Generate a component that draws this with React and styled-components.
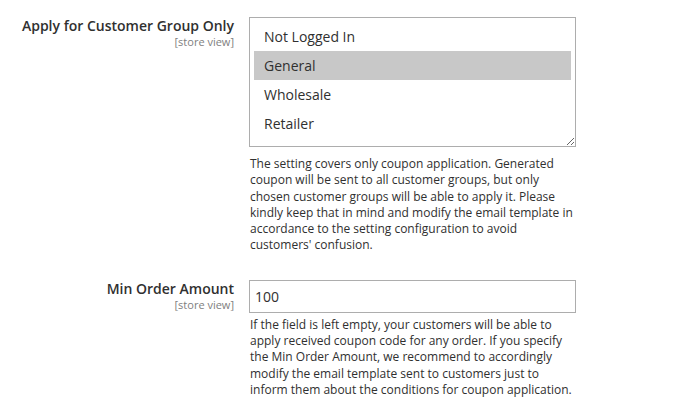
import styled, { createGlobalStyle } from 'styled-components';

const Global = createGlobalStyle`
  body {
    margin: 0;
    background: #fff;
    font-family: 'Open Sans', 'Liberation Sans', sans-serif;
    color: #303030;
  }
`;

const Page = styled.div`
  padding-top: 17px;
  width: 684px;
`;

const Field = styled.div`
  display: grid;
  grid-template-columns: 234px 327px;
  column-gap: 15px;
  margin-bottom: ${p => p.$gap || 0}px;
`;

const Label = styled.div`
  text-align: right;

  span {
    display: block;
    font-size: 14px;
    font-weight: 600;
    line-height: 17px;
    color: #303030;
  }
  small {
    display: block;
    font-size: 11px;
    line-height: 15px;
    color: #808080;
  }
`;

const Control = styled.div`
  display: flex;
  flex-direction: column;
`;

const MultiSelect = styled.div`
  box-sizing: border-box;
  height: 130px;
  padding: 4px 4px 8px;
  border: 1px solid #adadad;
  overflow: hidden;
  resize: both;
`;

const Option = styled.div`
  height: 29px;
  padding-left: 10px;
  font-size: 14px;
  line-height: 29px;
  color: #303030;
  background: ${p => (p.$selected ? '#c8c8c8' : 'transparent')};
`;

const TextInput = styled.input`
  box-sizing: border-box;
  width: 100%;
  height: 33px;
  padding: 0 5px;
  border: 1px solid #adadad;
  font-family: inherit;
  font-size: 14px;
  color: #303030;
  outline: none;
`;

const Note = styled.p`
  margin: ${p => p.$top}px 0 0;
  padding-left: 1px;
  font-size: 12px;
  line-height: 16.3px;
  color: #303030;
`;

const groups = ['Not Logged In', 'General', 'Wholesale', 'Retailer'];

export default function App() {
  return (
    <Page>
      <Global />
      <Field $gap={26}>
        <Label>
          <span>Apply for Customer Group Only</span>
          <small>[store view]</small>
        </Label>
        <Control>
          <MultiSelect>
            {groups.map(g => (
              <Option key={g} $selected={g === 'General'}>{g}</Option>
            ))}
          </MultiSelect>
          <Note $top={9}>
            The setting covers only coupon application. Generated coupon will be sent to all
            customer groups, but only chosen customer groups will be able to apply it. Please
            kindly keep that in mind and modify the email template in accordance to the setting
            configuration to avoid customers' confusion.
          </Note>
        </Control>
      </Field>
      <Field>
        <Label>
          <span>Min Order Amount</span>
          <small>[store view]</small>
        </Label>
        <Control>
          <TextInput defaultValue="100" />
          <Note $top={4}>
            If the field is left empty, your customers will be able to apply received coupon code
            for any order. If you specify the Min Order Amount, we recommend to accordingly modify
            the email template sent to customers just to inform them about the conditions for
            coupon application.
          </Note>
        </Control>
      </Field>
    </Page>
  );
}
